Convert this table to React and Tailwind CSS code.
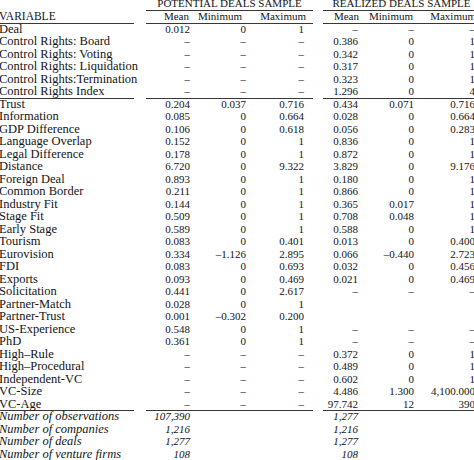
import React from 'react';

const D = '–';

const topRows = [
  ['Deal', '0.012', '0', '1', D, D, D],
  ['Control Rights: Board', D, D, D, '0.386', '0', '1'],
  ['Control Rights: Voting', D, D, D, '0.342', '0', '1'],
  ['Control Rights: Liquidation', D, D, D, '0.317', '0', '1'],
  ['Control Rights:Termination', D, D, D, '0.323', '0', '1'],
  ['Control Rights Index', D, D, D, '1.296', '0', '4'],
];

const midRows = [
  ['Trust', '0.204', '0.037', '0.716', '0.434', '0.071', '0.716'],
  ['Information', '0.085', '0', '0.664', '0.028', '0', '0.664'],
  ['GDP Difference', '0.106', '0', '0.618', '0.056', '0', '0.283'],
  ['Language Overlap', '0.152', '0', '1', '0.836', '0', '1'],
  ['Legal Difference', '0.178', '0', '1', '0.872', '0', '1'],
  ['Distance', '6.720', '0', '9.322', '3.829', '0', '9.176'],
  ['Foreign Deal', '0.893', '0', '1', '0.180', '0', '1'],
  ['Common Border', '0.211', '0', '1', '0.866', '0', '1'],
  ['Industry Fit', '0.144', '0', '1', '0.365', '0.017', '1'],
  ['Stage Fit', '0.509', '0', '1', '0.708', '0.048', '1'],
  ['Early Stage', '0.589', '0', '1', '0.588', '0', '1'],
  ['Tourism', '0.083', '0', '0.401', '0.013', '0', '0.400'],
  ['Eurovision', '0.334', '–1.126', '2.895', '0.066', '–0.440', '2.723'],
  ['FDI', '0.083', '0', '0.693', '0.032', '0', '0.456'],
  ['Exports', '0.093', '0', '0.469', '0.021', '0', '0.469'],
  ['Solicitation', '0.441', '0', '2.617', D, D, D],
  ['Partner-Match', '0.028', '0', '1', '', '', ''],
  ['Partner-Trust', '0.001', '–0.302', '0.200', '', '', ''],
  ['US-Experience', '0.548', '0', '1', D, D, D],
  ['PhD', '0.361', '0', '1', D, D, D],
  ['High–Rule', D, D, D, '0.372', '0', '1'],
  ['High–Procedural', D, D, D, '0.489', '0', '1'],
  ['Independent-VC', D, D, D, '0.602', '0', '1'],
  ['VC-Size', D, D, D, '4.486', '1.300', '4,100.000'],
  ['VC-Age', D, D, D, '97.742', '12', '390'],
];

const countRows = [
  ['Number of observations', '107,390', '1,277'],
  ['Number of companies', '1,216', '1,216'],
  ['Number of deals', '1,277', '1,277'],
  ['Number of venture firms', '108', '108'],
];

const grid = 'grid grid-cols-[134px_12px_49px_56px_62px_10px_45px_52px_60px] w-[480px]';
const pads = ['pr-[5px]', 'pr-[5px]', 'pr-[9px]', 'pr-[10px]', 'pr-[6px]', 'pr-[5px]'];
const rule = 'border-b border-[#383838]';

function Row({ cells, ruled, italic }) {
  const b = ruled ? rule : '';
  const [label, ...nums] = cells;
  return (
    <div className={`${grid} h-[12.5px] leading-[11.5px] ${italic ? 'italic' : ''}`}>
      <div className={`${b} text-[12.5px] leading-[10.5px] whitespace-nowrap -ml-[1px]`}>{label}</div>
      <div />
      {nums.slice(0, 3).map((n, i) => (
        <div key={i} className={`${b} text-right text-[11px] ${pads[i]}`}>{n}</div>
      ))}
      <div />
      {nums.slice(3).map((n, i) => (
        <div key={i} className={`${b} text-right text-[11px] ${pads[i + 3]}`}>{n}</div>
      ))}
    </div>
  );
}

export default function App() {
  return (
    <div className="w-[474px] h-[460px] overflow-hidden bg-white text-[#141414]" style={{ fontFamily: '"Liberation Serif", "Times New Roman", serif' }}>
      {/* group headings */}
      <div className={`${grid} h-[11px] leading-[7px] text-[11px]`}>
        <div />
        <div />
        <div className={`col-span-3 ${rule} text-center whitespace-nowrap`}>POTENTIAL DEALS SAMPLE</div>
        <div />
        <div className={`col-span-3 ${rule} text-center whitespace-nowrap`}>REALIZED DEALS SAMPLE</div>
      </div>

      {/* column headings */}
      <div className={`${grid} h-[12.5px] leading-[11.5px] text-[11px]`}>
        <div className={`${rule} -ml-[1px] text-[11.5px]`}>VARIABLE</div>
        <div />
        <div className={`${rule} text-right pr-[6px]`}>Mean</div>
        <div className={`${rule} text-right pr-[9px]`}>Minimum</div>
        <div className={`${rule} text-right pr-[7px]`}>Maximum</div>
        <div />
        <div className={`${rule} text-right pr-[9px]`}>Mean</div>
        <div className={`${rule} text-right pr-[7px]`}>Minimum</div>
        <div className={`${rule} text-right pr-[4px] whitespace-nowrap`}>Maximum</div>
      </div>

      {topRows.map((r, i) => (
        <Row key={r[0]} cells={r} ruled={i === topRows.length - 1} />
      ))}
      {midRows.map((r, i) => (
        <Row key={r[0]} cells={r} ruled={i === midRows.length - 1} />
      ))}
      {countRows.map((r) => (
        <Row key={r[0]} cells={[r[0], r[1], '', '', r[2], '', '']} italic />
      ))}
    </div>
  );
}
